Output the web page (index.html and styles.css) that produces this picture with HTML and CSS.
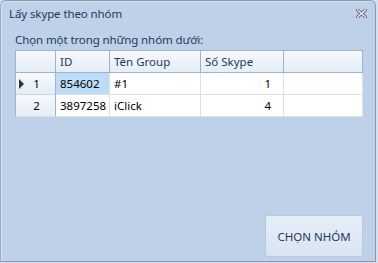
FILE: index.html
```html
<!DOCTYPE html>
<html>
<head>
<meta charset="utf-8">
<link rel="stylesheet" href="styles.css">
</head>
<body>
<div class="window">
  <div class="titlebar">
    <span class="title">Lấy skype theo nhóm</span>
    <svg class="close" width="11" height="9" viewBox="0 0 11 9">
      <path d="M1.5 1 L9.5 8 M9.5 1 L1.5 8" stroke="#5a6678" stroke-width="3.2" stroke-linecap="square"/>
      <path d="M1.5 1 L9.5 8 M9.5 1 L1.5 8" stroke="#f4f6fa" stroke-width="1.3" stroke-linecap="square"/>
    </svg>
  </div>
  <div class="client">
    <div class="label">Chọn một trong những nhóm dưới:</div>
    <div class="grid">
      <div class="row head">
        <div class="cell rh"></div>
        <div class="cell c-id">ID</div>
        <div class="cell c-name">Tên Group</div>
        <div class="cell c-num">Số Skype</div>
        <div class="cell c-fill"></div>
      </div>
      <div class="row">
        <div class="cell rh"><span class="arrow"></span><span class="rn">1</span></div>
        <div class="cell c-id sel">854602</div>
        <div class="cell c-name">#1</div>
        <div class="cell c-num num">1</div>
        <div class="cell c-fill"></div>
      </div>
      <div class="row">
        <div class="cell rh"><span class="rn">2</span></div>
        <div class="cell c-id">3897258</div>
        <div class="cell c-name">iClick</div>
        <div class="cell c-num num">4</div>
        <div class="cell c-fill"></div>
      </div>
    </div>
    <div class="footer">
      <button class="btn">CHỌN NHÓM</button>
    </div>
  </div>
</div>
</body>
</html>
```

FILE: styles.css
```css
html, body {
  margin: 0;
  padding: 0;
  background: #d5deea;
}
body {
  width: 378px;
  height: 263px;
  overflow: hidden;
  font-family: "Noto Sans", "Open Sans", sans-serif;
}
.window {
  box-sizing: border-box;
  width: 376px;
  height: 262px;
  background: #bfd1e8;
  border: 1px solid #8799b0;
  border-left-color: #9aabc2;
  border-radius: 6px 6px 0 0;
  display: flex;
  flex-direction: column;
  box-shadow: inset 1px 1px 0 #d6e2f2;
}
.titlebar {
  height: 28px;
  display: flex;
  align-items: center;
  justify-content: space-between;
  padding: 0 8px 3px 8px;
  box-sizing: border-box;
}
.title {
  font-size: 11.5px;
  color: #1e395b;
  letter-spacing: -0.1px;
}
.close {
  display: block;
  margin-top: 0;
}
.client {
  flex: 1;
  display: flex;
  flex-direction: column;
  padding: 4px 11px 0 14px;
}
.label {
  font-size: 11.5px;
  color: #1e395b;
  height: 17px;
  line-height: 14px;
  padding-left: 0;
  letter-spacing: -0.1px;
}
.grid {
  width: 348px;
  border: 1px solid #9eb3cc;
  border-bottom: none;
  border-right: none;
  background: #bfd1e8;
  font-size: 11.5px;
  color: #000;
}
.row {
  display: flex;
  height: 22px;
}
.cell {
  box-sizing: border-box;
  height: 22px;
  border-right: 1px solid #e0e0e0;
  border-bottom: 1px solid #e0e0e0;
  background: #fff;
  line-height: 21px;
  padding: 0 4px;
  white-space: nowrap;
}
.head .cell {
  background: linear-gradient(#f6f9fc, #e5edf7);
  border-right: 1px solid #9eb3cc;
  border-bottom: 1px solid #9eb3cc;
  color: #1e395b;
}
.rh {
  width: 40px;
  background: linear-gradient(#f6f9fc, #e5edf7);
  border-right: 1px solid #9eb3cc;
  border-bottom: 1px solid #c9d6e6;
  position: relative;
  text-align: center;
}
.row:last-child .rh { border-bottom-color: #9eb3cc; }
.row:last-child .cell { border-bottom-color: #e0e0e0; }
.arrow {
  position: absolute;
  left: 3px;
  top: 6px;
  width: 0;
  height: 0;
  border-top: 5px solid transparent;
  border-bottom: 5px solid transparent;
  border-left: 5px solid #333;
}
.rn { padding-left: 2px; }
.c-id { width: 54px; }
.c-name { width: 91px; }
.c-num { width: 83px; }
.c-fill { width: 79px; }
.num { text-align: right; padding-right: 12px; }
.sel { background: #bcdcf8; }
.footer {
  flex: 1;
  display: flex;
  justify-content: flex-end;
  align-items: flex-end;
  padding-bottom: 4px;
}
.btn {
  width: 98px;
  height: 42px;
  margin-right: 1px;
  border: 1px solid #b7c7dc;
  border-radius: 3px;
  background: linear-gradient(#e6eef8, #dae5f3);
  color: #1e395b;
  font-family: "Noto Sans", "Open Sans", sans-serif;
  font-size: 11.5px;
  padding: 0;
}
```
